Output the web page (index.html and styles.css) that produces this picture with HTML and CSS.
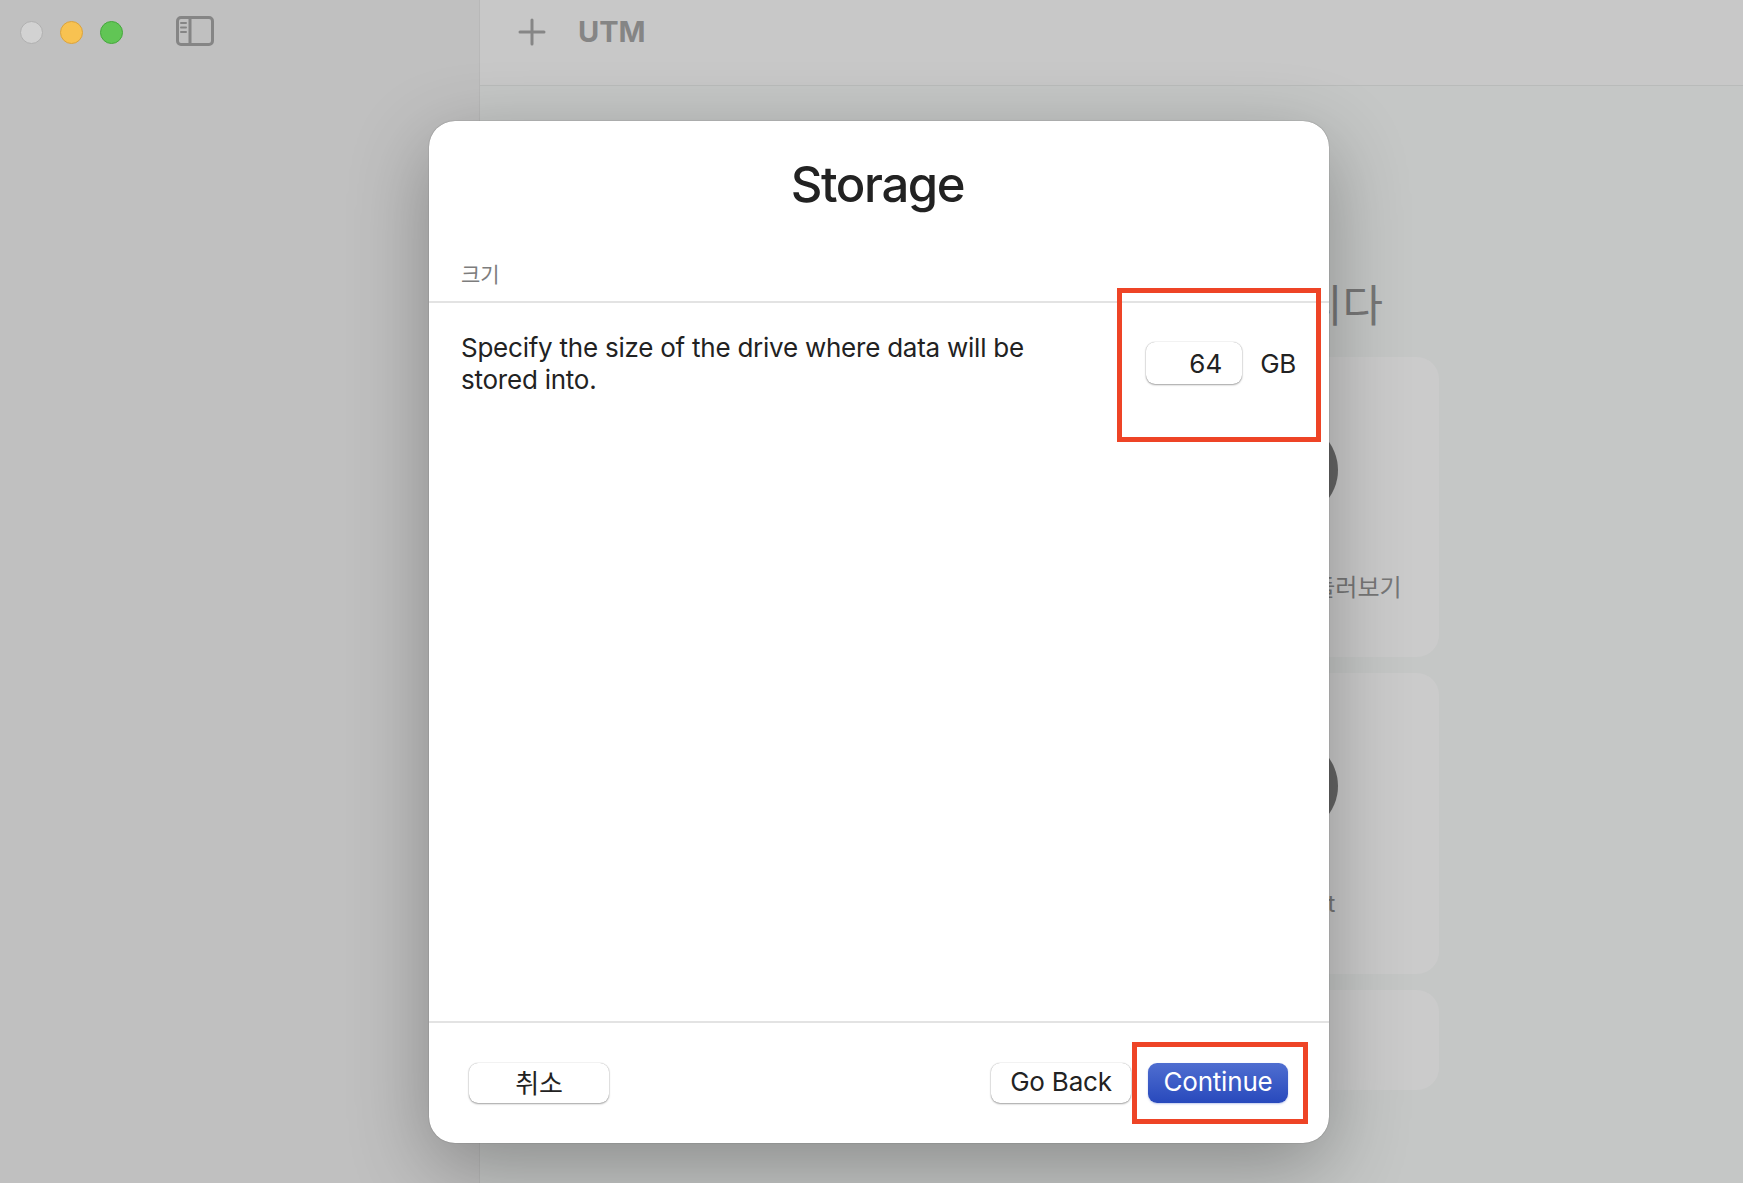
FILE: index.html
```html
<!DOCTYPE html>
<html lang="ko">
<head>
  <meta charset="UTF-8" />
  <meta name="viewport" content="width=device-width, initial-scale=1" />
  <title>UTM</title>
  <link rel="stylesheet" href="styles.css">
</head>
<body>

  <div class="app">
    <aside class="sidebar">
      <div class="lights">
        <span class="light light-close"></span>
        <span class="light light-min"></span>
        <span class="light light-max"></span>
      </div>
      <svg class="sidebar-icon" width="38" height="30" viewBox="0 0 38 30" fill="none" stroke="#858585" stroke-width="3">
        <rect x="1.5" y="1.5" width="35" height="27" rx="3.5" />
        <path d="M14 2v26" />
        <path d="M5 7h5M5 11.5h5M5 16h5" stroke-width="2" stroke-linecap="round" />
      </svg>
    </aside>

    <main class="main">
      <header class="toolbar">
        <svg class="plus-icon" width="28" height="28" viewBox="0 0 28 28" fill="none" stroke="#868686" stroke-width="3" stroke-linecap="round">
          <path d="M14 2v24M2 14h24" />
        </svg>
        <span class="toolbar-title">UTM</span>
      </header>

      <div class="welcome">
        <h2 class="welcome-title">UTM에 오신 것을 환영합니다</h2>
        <div class="card">
          <div class="tile"><span class="tile-circle"></span><span class="tile-label">새 가상머신 만들기</span></div>
          <div class="tile"><span class="tile-circle"></span><span class="tile-label">UTM 갤러리 둘러보기</span></div>
        </div>
        <div class="card card-tall">
          <div class="tile"><span class="tile-circle"></span><span class="tile-label">사용자 안내서</span></div>
          <div class="tile"><span class="tile-circle"></span><span class="tile-label">Support</span></div>
        </div>
        <div class="card card-small"></div>
      </div>
    </main>
  </div>

  <div class="modal">
    <h1 class="modal-title">Storage</h1>
    <div class="section-label">크기</div>
    <div class="section-body">
      <p class="section-text">Specify the size of the drive where data will be stored into.</p>
      <div class="size-field">
        <div class="size-input">64</div>
        <span class="size-unit">GB</span>
      </div>
    </div>
    <footer class="modal-footer">
      <button class="btn btn-cancel">취소</button>
      <div class="footer-right">
        <button class="btn">Go Back</button>
        <button class="btn btn-primary">Continue</button>
      </div>
    </footer>
  </div>

  <!-- red marks drawn over the screenshot -->
  <div class="mark mark-size"></div>
  <div class="mark mark-continue"></div>

</body>
</html>
```

FILE: styles.css
```css
* {
  box-sizing: border-box;
}
html, body {
  height: 100%;
}
body {
  margin: 0;
  overflow: hidden;
  font-family: Inter, "Noto Sans CJK KR", sans-serif;
  color: #222;
  background: #c5c7c6;
}
.app {
  display: flex;
  height: 1183px;
}

/* sidebar */
.sidebar {
  width: 480px;
  flex-shrink: 0;
  display: flex;
  align-items: flex-start;
  padding: 16px 0 0 19.5px;
  background: #c0c0c0;
  border-right: 1px solid #b8b8b8;
}
.lights {
  display: flex;
  gap: 17px;
  margin-top: 5px;
}
.light {
  width: 23px;
  height: 23px;
  border-radius: 50%;
  border: 1px solid;
}
.light-close {
  background: #d2d2d2;
  border-color: #b0b0b0;
}
.light-min {
  background: #f8c251;
  border-color: #dba33c;
}
.light-max {
  background: #61c555;
  border-color: #45a83c;
}
.sidebar-icon {
  margin-left: 53.5px;
}

/* main area behind the sheet */
.main {
  flex: 1;
  display: flex;
  flex-direction: column;
}
.toolbar {
  height: 86px;
  flex-shrink: 0;
  display: flex;
  align-items: center;
  padding: 0 0 22px 38px;
  gap: 32px;
  background: #c8c8c8;
  border-bottom: 1px solid #b9bbba;
}
.toolbar-title {
  font-size: 29px;
  font-weight: 700;
  color: #858585;
}
.welcome {
  width: 654px;
  margin: 0 auto;
  display: flex;
  flex-direction: column;
  gap: 16px;
}
.welcome-title {
  margin: 191px 0 6px;
  font-size: 44px;
  font-weight: 400;
  line-height: 58px;
  text-align: center;
  white-space: nowrap;
  color: #777;
}
.card {
  height: 300px;
  display: flex;
  padding: 65px 0 0 60px;
  background: #cbcbcb;
  border-radius: 22px;
}
.card-tall {
  height: 301px;
}
.card-small {
  height: 100px;
  padding: 0;
}
.tile {
  flex: 1;
  display: flex;
  flex-direction: column;
  align-items: center;
  gap: 52px;
}
.tile-circle {
  width: 96px;
  height: 96px;
  border-radius: 50%;
  background: #666;
}
.tile-label {
  font-size: 24px;
  line-height: 36px;
  white-space: nowrap;
  color: #777;
}

/* sheet */
.modal {
  position: absolute;
  left: 429px;
  top: 121px;
  width: 900px;
  height: 1022px;
  display: flex;
  flex-direction: column;
  background: #fff;
  border-radius: 26px;
  box-shadow: 0 0 1px rgba(0,0,0,0.55), 0 24px 80px rgba(0,0,0,0.3);
}
.modal-title {
  margin: 0;
  padding: 29px 3px 0 0;
  height: 126px;
  font-size: 49px;
  font-weight: 500;
  line-height: 70px;
  text-align: center;
  letter-spacing: -1.4px;
  color: #222;
}
.section-label {
  height: 56px;
  padding: 13px 32px 0;
  font-size: 21px;
  line-height: 30px;
  color: #7d7d7d;
  border-bottom: 2px solid #e3e3e3;
}
.section-body {
  flex: 1;
  display: flex;
  justify-content: space-between;
  align-items: flex-start;
  padding: 29px 33px 0 32px;
}
.section-text {
  width: 590px;
  margin: 0;
  font-size: 26px;
  line-height: 32px;
  letter-spacing: -0.24px;
  color: #222;
}
.size-field {
  display: flex;
  align-items: center;
  gap: 18px;
  margin-top: 10px;
  font-size: 26px;
}
.size-input {
  width: 96px;
  height: 42px;
  padding-right: 20px;
  line-height: 44px;
  text-align: right;
  border-radius: 9px;
  background: #fff;
  box-shadow: 0 0 1px rgba(0,0,0,0.35), 0 1px 2px rgba(0,0,0,0.35);
}
.size-unit {
  letter-spacing: -0.3px;
}
.modal-footer {
  height: 122px;
  flex-shrink: 0;
  display: flex;
  justify-content: space-between;
  padding: 40px 41px 0 40px;
  border-top: 2px solid #e3e3e3;
}
.footer-right {
  display: flex;
  gap: 17px;
}
.btn {
  width: 140px;
  height: 40px;
  padding: 0 0 3px;
  border: none;
  border-radius: 9px;
  font-family: inherit;
  font-size: 26px;
  letter-spacing: -0.2px;
  color: #222;
  background: #fff;
  box-shadow: 0 0 1px rgba(0,0,0,0.35), 0 1px 2px rgba(0,0,0,0.35);
}
.btn-primary {
  color: #fff;
  background: linear-gradient(#4f6ed0, #2849bc);
  box-shadow: 0 1px 2px rgba(40,73,188,0.3);
}

/* red annotation boxes */
.mark {
  position: absolute;
  border: 5px solid #ee4426;
}
.mark-size {
  left: 1117px;
  top: 288px;
  width: 204px;
  height: 154px;
}
.mark-continue {
  left: 1132px;
  top: 1042px;
  width: 176px;
  height: 82px;
}
```
